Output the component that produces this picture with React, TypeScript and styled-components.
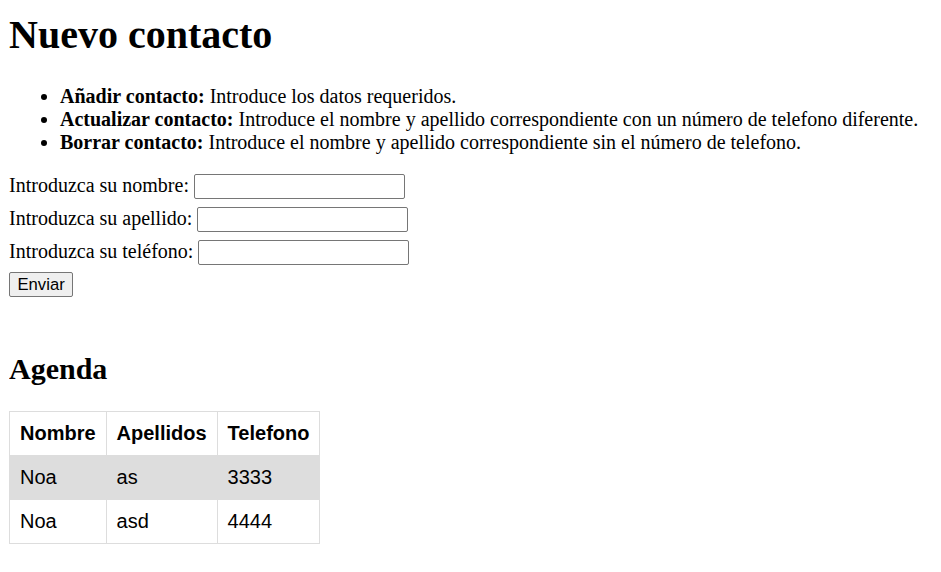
import React from "react";
import styled, { createGlobalStyle } from "styled-components";

const GlobalStyle = createGlobalStyle`
  html, body { background: #ffffff; }
  body {
    margin: 12px 10px 10px 9px;
    font-family: "Liberation Serif", "Times New Roman", serif;
    font-size: 20px;
    color: #000;
  }
`;

const Title = styled.h1`
  font-size: 40px;
  font-weight: bold;
  line-height: 46px;
  margin: 0 0 26.8px;
`;

const Instructions = styled.ul`
  margin: 0 0 20px;
  padding-left: 51px;
  line-height: 23px;
  list-style: disc;
`;

const Form = styled.form`
  display: flex;
  flex-direction: column;
  align-items: flex-start;
  gap: 7.4px;
  padding-top: 0;
  padding-bottom: 29.5px;
  margin: 0;
`;

const Row = styled.div`
  display: flex;
  align-items: baseline;
  gap: 5px;
`;

const Label = styled.label`
  line-height: 23px;
`;

const Input = styled.input`
  box-sizing: border-box;
  width: 211px;
  height: 25px;
  border: 1px solid #767676;
  border-radius: 2px;
  padding: 1px 2px;
  font-family: "Liberation Sans", Arial, sans-serif;
  font-size: 16.67px;
  background: #fff;
`;

const Button = styled.button`
  box-sizing: border-box;
  height: 25px;
  padding: 1px 7.5px;
  border: 1px solid #767676;
  border-radius: 2px;
  background: #efefef;
  color: #000;
  font-family: "Liberation Sans", Arial, sans-serif;
  font-size: 16.67px;
`;

const Subtitle = styled.h2`
  font-size: 30px;
  font-weight: bold;
  line-height: 34.5px;
  margin: 24.9px 0;
`;

const Table = styled.table`
  border-collapse: collapse;
  font-family: "Liberation Sans", Arial, sans-serif;
  font-size: 20px;

  tr:nth-child(even) {
    background: #dddddd;
  }
`;

const Th = styled.th`
  border: 1px solid #dddddd;
  padding: 10px;
  text-align: left;
  font-weight: bold;
  line-height: 23px;
`;

const Td = styled.td`
  border: 1px solid #dddddd;
  padding: 10px;
  text-align: left;
  line-height: 23px;
`;

const contacts = [
  { nombre: "Noa", apellidos: "as", telefono: "3333" },
  { nombre: "Noa", apellidos: "asd", telefono: "4444" },
];

export default function App() {
  return (
    <>
      <GlobalStyle />
      <Title>Nuevo contacto</Title>
      <Instructions>
        <li>
          <b>Añadir contacto:</b> Introduce los datos requeridos.
        </li>
        <li>
          <b>Actualizar contacto:</b> Introduce el nombre y apellido correspondiente con un número de telefono diferente.
        </li>
        <li>
          <b>Borrar contacto:</b> Introduce el nombre y apellido correspondiente sin el número de telefono.
        </li>
      </Instructions>
      <Form onSubmit={(e) => e.preventDefault()}>
        <Row>
          <Label htmlFor="nombre">Introduzca su nombre:</Label>
          <Input id="nombre" type="text" />
        </Row>
        <Row>
          <Label htmlFor="apellido">Introduzca su apellido:</Label>
          <Input id="apellido" type="text" />
        </Row>
        <Row>
          <Label htmlFor="telefono">Introduzca su teléfono:</Label>
          <Input id="telefono" type="text" />
        </Row>
        <Button type="submit">Enviar</Button>
      </Form>
      <Subtitle>Agenda</Subtitle>
      <Table>
        <tbody>
          <tr>
            <Th>Nombre</Th>
            <Th>Apellidos</Th>
            <Th>Telefono</Th>
          </tr>
          {contacts.map((c, i) => (
            <tr key={i}>
              <Td>{c.nombre}</Td>
              <Td>{c.apellidos}</Td>
              <Td>{c.telefono}</Td>
            </tr>
          ))}
        </tbody>
      </Table>
    </>
  );
}
